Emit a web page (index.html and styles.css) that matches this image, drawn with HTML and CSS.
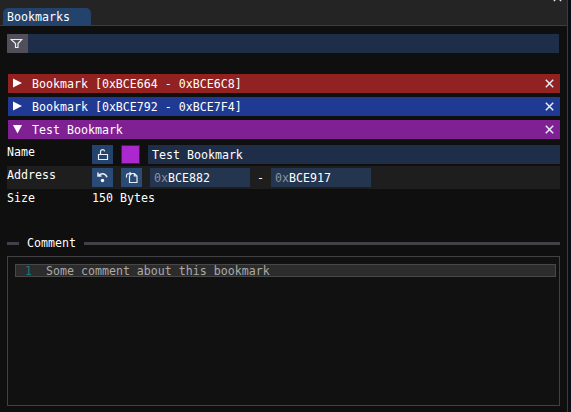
FILE: index.html
```
<!DOCTYPE html>
<html lang="en">
<head>
<meta charset="utf-8">
<title>Bookmarks</title>
<link rel="stylesheet" href="styles.css">
</head>
<body>
<div class="window">
  <header class="tabbar">
    <div class="tab">Bookmarks</div>
    <svg class="window-close" width="9" height="9" viewBox="0 0 9 9"><path d="M.8.8l7.4 7.4M8.2.8L.8 8.2"/></svg>
  </header>
  <main class="body">
    <div class="filter">
      <div class="filter-btn"><svg width="13" height="13" viewBox="0 0 13 13"><path d="M1.200 2.500h10.600L8 6.500V10.500H5.500V6.500z"/></svg></div>
      <div class="filter-input"></div>
    </div>
    <div class="bookmark red">
      <svg class="arrow" width="9" height="10" viewBox="0 0 9 10"><path d="M0 0.4L9 5L0 9.6z"/></svg>
      <span>Bookmark [0xBCE664 - 0xBCE6C8]</span>
      <svg class="close" width="9" height="9" viewBox="0 0 9 9"><path d="M.8.8l7.4 7.4M8.2.8L.8 8.2"/></svg>
    </div>
    <div class="bookmark blue">
      <svg class="arrow" width="9" height="10" viewBox="0 0 9 10"><path d="M0 0.4L9 5L0 9.6z"/></svg>
      <span>Bookmark [0xBCE792 - 0xBCE7F4]</span>
      <svg class="close" width="9" height="9" viewBox="0 0 9 9"><path d="M.8.8l7.4 7.4M8.2.8L.8 8.2"/></svg>
    </div>
    <div class="bookmark purple">
      <svg class="arrow" width="9" height="10" viewBox="0 0 9 10"><path d="M0 1H9L4.5 9.5z"/></svg>
      <span>Test Bookmark</span>
      <svg class="close" width="9" height="9" viewBox="0 0 9 9"><path d="M.8.8l7.4 7.4M8.2.8L.8 8.2"/></svg>
    </div>
    <div class="row">
      <div class="label">Name</div>
      <div class="btn"><svg width="13" height="13" viewBox="0 0 13 13"><path d="M2.500 6.500h9v5h-9zM4.500 6.300V4Q4.500 1.700 6.700 1.700Q8.300 1.700 8.700 3.300"/></svg></div>
      <div class="swatch"></div>
      <div class="input name">Test Bookmark</div>
    </div>
    <div class="row shaded">
      <div class="label">Address</div>
      <div class="btn bright"><svg width="13" height="13" viewBox="0 0 13 13"><path class="thick" d="M2 1.500V5H5.500M2.500 4.500C5 1.900 9.500 1.900 11 6.300"/><circle class="solid" cx="6.500" cy="9.500" r="1.700"/></svg></div>
      <div class="btn bright"><svg width="13" height="13" viewBox="0 0 13 13"><path d="M5.500 2.500H9.500L12 5V11.500H4.500V4.800M9.300 2.500V5H12M1.500 6.500V4.500Q1.500 2.800 3 2.800H5.500M4.500 1.200L6.200 2.900L4.500 4.600"/></svg></div>
      <div class="input addr"><span class="prefix">0x</span>BCE882</div>
      <div class="dash">-</div>
      <div class="input addr end"><span class="prefix">0x</span>BCE917</div>
    </div>
    <div class="row">
      <div class="label">Size</div>
      <div class="value">150 Bytes</div>
    </div>
    <div class="separator"><span>Comment</span></div>
    <div class="editor">
      <div class="line"><span class="num">1</span><span>Some comment about this bookmark</span></div>
    </div>
  </main>
</div>
</body>
</html>
```
FILE: styles.css
```
* { box-sizing: border-box; }
body {
  margin: 0;
  height: 412px;
  overflow: hidden;
  background: #0b0e14;
  color: #fff;
  font: 11.627px/13px "DejaVu Sans Mono", monospace;
}
.window {
  width: 568px;
  height: 412px;
  background: #0f0f0f;
  border-right: 1px solid #3b3b3c;
}
span, .tab, .label, .input, .value { white-space: pre; }
svg { display: block; fill: none; stroke: #e8eef6; stroke-width: 1.2; }
.thick { stroke-width: 1.5; }
.solid { fill: #fff; stroke: none; }
.tabbar {
  position: relative;
  height: 26px;
  padding: 8px 0 0 3px;
  background: #242424;
  border-bottom: 1px solid #23416b;
  overflow: hidden;
}
.tab {
  width: 88px;
  height: 17px;
  padding: 3px 0 0 4px;
  background: #23436c;
  border-radius: 5px 5px 0 0;
}
.window-close { position: absolute; top: -7px; right: 5px; }
.body { padding: 8px 7px 0; }
.filter { display: flex; width: 552px; height: 19px; margin-bottom: 21px; }
.filter-btn { width: 21px; padding: 3px 0 0 3px; background: #504f5a; }
.filter-input { flex: 1; background: #1e2e48; }
.bookmark {
  display: flex;
  width: 552px;
  height: 19px;
  margin: 0 0 4px 1px;
  padding: 4px 6px 0 5px;
}
.bookmark .arrow { flex: none; margin-right: 10px; fill: #fff; stroke: none; }
.bookmark .close { margin: 1px 0 0 auto; stroke-width: 1.500; }
.red { background: #922222; }
.blue { background: #203a94; }
.purple { background: #7f2192; }
.row {
  display: flex;
  width: 553px;
  height: 23px;
  padding-top: 2px;
}
.shaded { background: #1e1e1e; }
.label { width: 85px; padding-top: 1px; }
.value { padding-top: 1px; }
.btn {
  width: 21px;
  height: 19px;
  margin-right: 8px;
  padding: 3px 0 0 4px;
  background: #23436c;
}
.bright { background: #294b76; }
.swatch {
  width: 19px;
  height: 19px;
  margin-right: 8px;
  background: #ab28ce;
  border: 1px solid #243047;
}
.input { height: 19px; padding: 4px 0 0 4px; background: #1e2e48; }
.name { flex: 1; }
.addr { width: 100px; background: #24354f; }
.prefix { color: #8b93a0; }
.dash { width: 21px; padding: 4px 0 0 7px; }
.separator {
  display: flex;
  align-items: center;
  gap: 8px;
  width: 553px;
  height: 13px;
  margin: 25px 0 6px;
}
.separator::before, .separator::after {
  content: "";
  width: 12px;
  height: 3px;
  background: #414149;
}
.separator::after { flex: 1; }
.editor {
  width: 553px;
  height: 150px;
  padding: 7px 3px 0 7px;
  background: #111;
  border: 1px solid #414144;
}
.line {
  display: flex;
  height: 13px;
  padding-left: 9px;
  background: #2c2c2c;
  border: 1px solid #484848;
  color: #aaa;
  line-height: 12px;
}
.num { width: 21px; color: #147b7c; }
```
